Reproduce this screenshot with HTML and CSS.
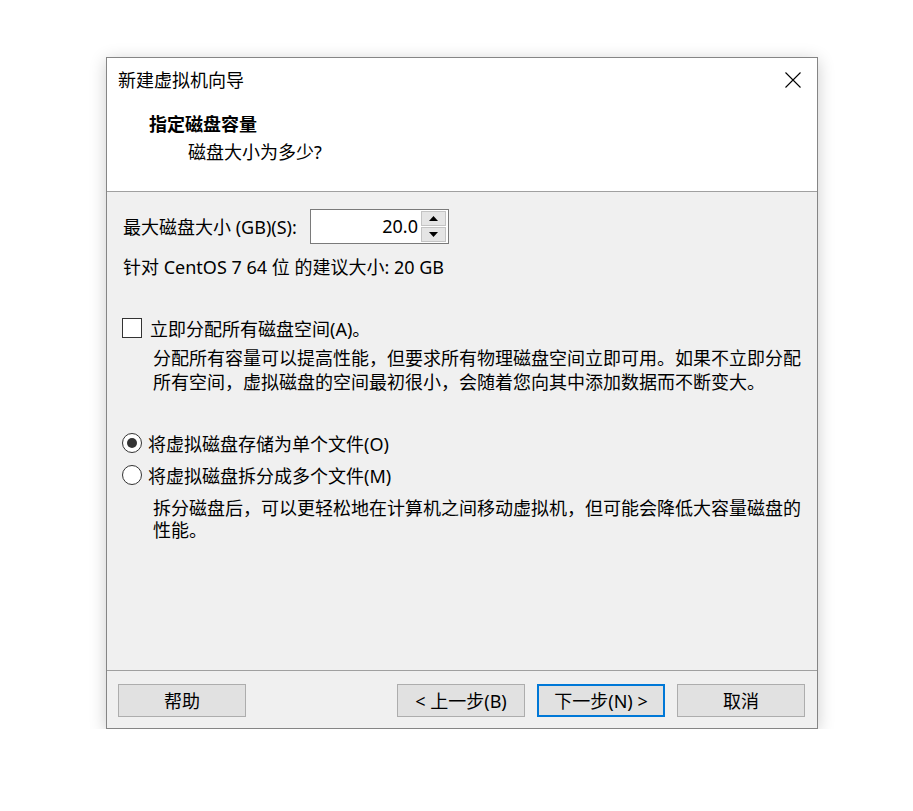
FILE: index.html
```html
<!DOCTYPE html>
<html lang="zh-CN">
<head>
<meta charset="utf-8">
<title>新建虚拟机向导</title>
<link rel="stylesheet" href="styles.css">
</head>
<body>
<div class="dialog">
  <div class="titlebar">
    <span class="title">新建虚拟机向导</span>
    <svg class="close" width="16" height="16" viewBox="0 0 16 16"><path d="M0.5 0.5 L15.5 15.5 M15.5 0.5 L0.5 15.5" stroke="#000" stroke-width="1.1" fill="none"/></svg>
  </div>
  <div class="header">
    <div class="heading">指定磁盘容量</div>
    <div class="subheading">磁盘大小为多少?</div>
  </div>
  <div class="content">
    <div class="size-row">
      <span class="size-label">最大磁盘大小 (GB)(S):</span>
      <div class="spin">
        <span class="spin-value">20.0</span>
        <div class="spin-buttons">
          <div class="spin-btn"><svg width="9" height="5" viewBox="0 0 9 5"><path d="M0 5 L4.5 0 L9 5 Z" fill="#000"/></svg></div>
          <div class="spin-btn"><svg width="9" height="5" viewBox="0 0 9 5"><path d="M0 0 L4.5 5 L9 0 Z" fill="#000"/></svg></div>
        </div>
      </div>
    </div>
    <div class="hint">针对 CentOS 7 64 位 的建议大小: 20 GB</div>
    <div class="option check-row">
      <span class="checkbox"></span>
      <span class="option-label">立即分配所有磁盘空间(A)。</span>
    </div>
    <div class="desc desc-alloc">分配所有容量可以提高性能，但要求所有物理磁盘空间立即可用。如果不立即分配<br>所有空间，虚拟磁盘的空间最初很小，会随着您向其中添加数据而不断变大。</div>
    <div class="option radio-row radio-first">
      <span class="radio checked"></span>
      <span class="radio-label">将虚拟磁盘存储为单个文件(O)</span>
    </div>
    <div class="option radio-row radio-second">
      <span class="radio"></span>
      <span class="radio-label">将虚拟磁盘拆分成多个文件(M)</span>
    </div>
    <div class="desc desc-split">拆分磁盘后，可以更轻松地在计算机之间移动虚拟机，但可能会降低大容量磁盘的<br>性能。</div>
  </div>
  <div class="footer">
    <button class="btn btn-help">帮助</button>
    <button class="btn">&lt; 上一步(B)</button>
    <button class="btn btn-default">下一步(N) &gt;</button>
    <button class="btn">取消</button>
  </div>
</div>
</body>
</html>
```
FILE: styles.css
```css
body {
  margin: 0;
  background: #ffffff;
  font-family: "Noto Sans", "Noto Sans CJK SC", sans-serif;
  font-size: 18px;
  color: #000;
}

.dialog {
  margin: 57px 0 0 106px;
  width: 710px;
  border: 1px solid #858585;
  background: #f0f0f0;
  box-shadow: 0 3px 16px rgba(0, 0, 0, 0.2);
}

.titlebar {
  height: 44px;
  background: #fff;
  display: flex;
  align-items: center;
  padding-left: 11px;
  box-sizing: border-box;
}

.title {
  flex: 1;
  line-height: 24px;
}

.close {
  display: block;
  margin-right: 16px;
}

.header {
  background: #fff;
  padding: 10px 0 27px 0;
  border-bottom: 1px solid #a0a0a0;
}

.heading {
  font-weight: bold;
  line-height: 24px;
  padding-left: 42px;
}

.subheading {
  line-height: 24px;
  margin-top: 4px;
  padding-left: 81px;
}

.content {
  height: 478px;
  box-sizing: border-box;
  padding: 17px 0 0 16px;
}

.size-row {
  display: flex;
  align-items: center;
  height: 35px;
}

.size-label {
  width: 187px;
  line-height: 24px;
}

.spin {
  width: 139px;
  height: 35px;
  box-sizing: border-box;
  border: 1px solid #7a7a7a;
  background: #fff;
  display: flex;
  align-items: center;
  padding: 1px 2px 1px 0;
}

.spin-value {
  flex: 1;
  text-align: right;
  padding-right: 3px;
  line-height: 24px;
  position: relative;
  top: -1px;
}

.spin-buttons {
  width: 25px;
  height: 31px;
  display: flex;
  flex-direction: column;
  gap: 1px;
}

.spin-btn {
  flex: 1;
  background: #e5e5e5;
  border: 1px solid #c4c4c4;
  display: flex;
  align-items: center;
  justify-content: center;
}

.spin-btn svg {
  display: block;
}

.hint {
  margin-top: 11px;
  line-height: 24px;
}

.option {
  display: flex;
  align-items: center;
  height: 24px;
  margin-left: -1px;
}

.check-row {
  margin-top: 37px;
}

.checkbox {
  width: 20px;
  height: 20px;
  box-sizing: border-box;
  border: 1px solid #333;
  background: #fff;
  margin-right: 8px;
}

.radio {
  width: 20px;
  height: 20px;
  box-sizing: border-box;
  border: 1px solid #333;
  border-radius: 50%;
  background: #fff;
  margin-right: 6px;
  display: flex;
  align-items: center;
  justify-content: center;
}

.radio.checked::after {
  content: "";
  width: 10px;
  height: 10px;
  border-radius: 50%;
  background: #333;
}

.desc {
  margin-left: 30px;
  white-space: nowrap;
}

.desc-alloc {
  margin-top: 6px;
  line-height: 24px;
}

.radio-first {
  margin-top: 37px;
}

.radio-second {
  margin-top: 8px;
}

.desc-split {
  margin-top: 10px;
  line-height: 22px;
}

.footer {
  height: 58px;
  box-sizing: border-box;
  border-top: 1px solid #a0a0a0;
  padding: 13px 12px 0 11px;
  display: flex;
  gap: 12px;
}

.btn {
  width: 128px;
  height: 33px;
  box-sizing: border-box;
  border: 1px solid #adadad;
  background: #e1e1e1;
  font-family: inherit;
  font-size: 18px;
  color: #000;
  padding: 0;
  line-height: 24px;
}

.btn-help {
  margin-right: auto;
}

.btn-default {
  border: 2px solid #0078d7;
}
```
